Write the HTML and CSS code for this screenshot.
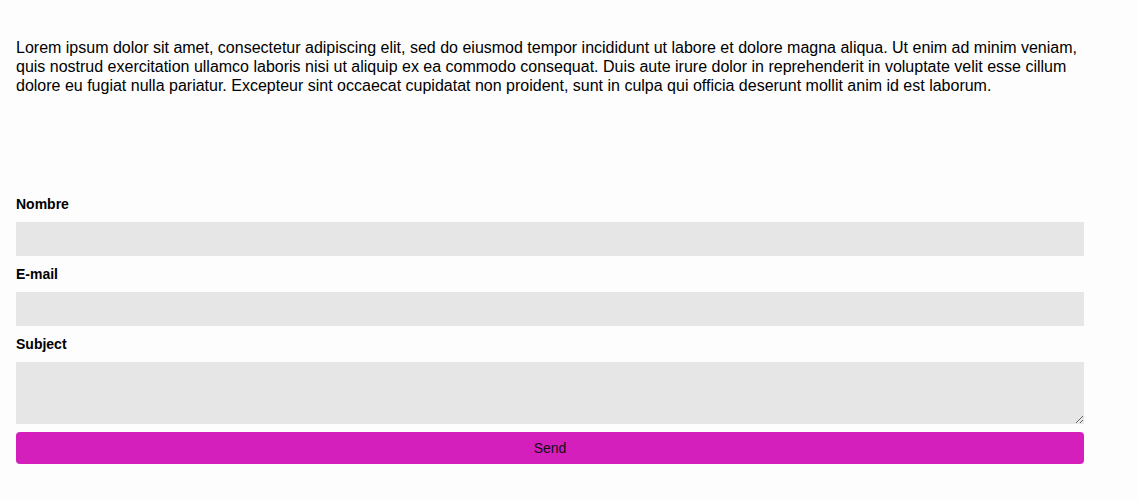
FILE: index.html
```html
<!DOCTYPE html>
<html lang="es">
<head>
<meta charset="utf-8">
<title>Contacto</title>
<link rel="stylesheet" href="styles.css">
</head>
<body>
<main class="page">
  <p class="intro">Lorem ipsum dolor sit amet, consectetur adipiscing elit, sed do eiusmod tempor incididunt ut labore et dolore magna aliqua. Ut enim ad minim veniam, quis nostrud exercitation ullamco laboris nisi ut aliquip ex ea commodo consequat. Duis aute irure dolor in reprehenderit in voluptate velit esse cillum dolore eu fugiat nulla pariatur. Excepteur sint occaecat cupidatat non proident, sunt in culpa qui officia deserunt mollit anim id est laborum.</p>
  <form class="contact">
    <label class="field-label" for="nombre">Nombre</label>
    <input class="field" id="nombre" type="text">
    <label class="field-label" for="email">E-mail</label>
    <input class="field" id="email" type="email">
    <label class="field-label" for="subject">Subject</label>
    <textarea class="field area" id="subject"></textarea>
    <button class="send" type="button">Send</button>
  </form>
</main>
</body>
</html>
```
FILE: styles.css
```css
html, body {
  margin: 0;
  padding: 0;
  background: #fdfdfd;
}
body {
  font-family: "Liberation Sans", Arial, sans-serif;
  color: #000;
}
.page {
  width: 1068px;
  padding: 38px 16px 0;
}
.intro {
  margin: 0;
  font-size: 16px;
  line-height: 19px;
}
.contact {
  display: flex;
  flex-direction: column;
  margin-top: 101px;
}
.field-label {
  font-size: 14px;
  font-weight: bold;
  line-height: 16px;
  margin-bottom: 10px;
}
.field {
  box-sizing: border-box;
  width: 100%;
  height: 34px;
  border: none;
  background: #e6e6e6;
  margin: 0 0 10px;
  padding: 0 8px;
  font-family: inherit;
  font-size: 14px;
  outline: none;
}
.area {
  height: 62px;
  margin-bottom: 8px;
  resize: vertical;
  padding: 8px;
}
.send {
  height: 32px;
  border: none;
  border-radius: 4px;
  background: #d41fbc;
  color: #111;
  font-family: inherit;
  font-size: 14px;
  padding: 0;
}
```
